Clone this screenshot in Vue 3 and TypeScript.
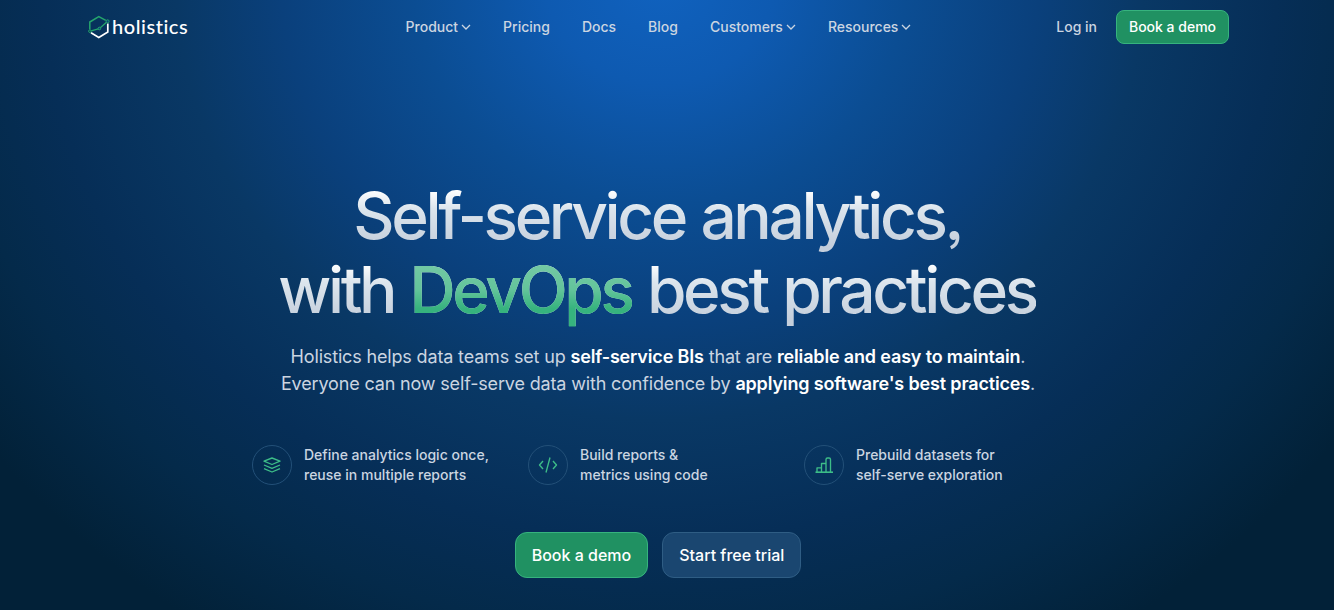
<script setup lang="ts">
import { ref } from 'vue'

interface NavItem {
  label: string
  dropdown: boolean
}

interface Feature {
  icon: string
  lines: string[]
}

const navItems = ref<NavItem[]>([
  { label: 'Product', dropdown: true },
  { label: 'Pricing', dropdown: false },
  { label: 'Docs', dropdown: false },
  { label: 'Blog', dropdown: false },
  { label: 'Customers', dropdown: true },
  { label: 'Resources', dropdown: true },
])

const features = ref<Feature[]>([
  { icon: 'layers', lines: ['Define analytics logic once,', 'reuse in multiple reports'] },
  { icon: 'code', lines: ['Build reports &', 'metrics using code'] },
  { icon: 'chart', lines: ['Prebuild datasets for', 'self-serve exploration'] },
])
</script>

<template>
  <div class="page">
    <header class="header">
      <a class="logo">
        <svg class="logo-mark" width="24" height="24" viewBox="0 0 24 24" fill="none">
          <path d="M1.800 14.500V7L10.800 1.600l7 3.700" stroke="#25a56c" stroke-width="1.500" />
          <path d="M3 17.800 10.800 22.400l9-5.400V8.400" stroke="#fff" stroke-width="1.700" />
          <path d="M3.200 15.800 10.300 14l2-1.200 6.200-5.600" stroke="#25a56c" stroke-width="1.300" />
          <circle cx="1.900" cy="16.200" r="1.300" stroke="#25a56c" />
          <circle cx="11.400" cy="13.500" r="1.300" stroke="#25a56c" fill="#0a417d" />
          <circle cx="19.600" cy="6.300" r="1.500" stroke="#25a56c" fill="#0a417d" />
        </svg>
        <span class="logo-text">holistics</span>
      </a>
      <nav class="nav">
        <a v-for="item in navItems" :key="item.label" class="nav-link">
          {{ item.label }}
          <svg v-if="item.dropdown" class="chevron" width="10" height="6" viewBox="0 0 10 6" fill="none">
            <path d="M1 1l4 4 4-4" stroke="currentColor" stroke-width="1.300" />
          </svg>
        </a>
      </nav>
      <div class="actions">
        <a class="nav-link">Log in</a>
        <button class="btn btn-small btn-green">Book a demo</button>
      </div>
    </header>

    <main class="hero">
      <h1 class="title">
        <span class="title-line">Self-service analytics,</span>
        <span class="title-line">with <em>DevOps</em> best practices</span>
      </h1>
      <p class="subtitle">
        Holistics helps data teams set up <b>self-service BIs</b> that are <b>reliable and easy to maintain</b>.<br>
        Everyone can now self-serve data with confidence by <b>applying software's best practices</b>.
      </p>
      <ul class="features">
        <li v-for="feature in features" :key="feature.icon" class="feature">
          <span class="feature-icon">
            <svg v-if="feature.icon === 'layers'" width="20" height="20" viewBox="0 0 20 20" fill="none">
              <path d="M2 6.200 10 3l8 3.200-8 3.300z" />
              <path d="M2 10l8 3.300 8-3.300M2 13.700l8 3.300 8-3.300" />
            </svg>
            <svg v-else-if="feature.icon === 'code'" width="20" height="20" viewBox="0 0 20 20" fill="none">
              <path d="M5 6 1.500 10 5 14M15 6l3.500 4-3.500 4M12 2.500l-4 15" />
            </svg>
            <svg v-else width="20" height="20" viewBox="0 0 20 20" fill="none">
              <path d="M3 17v-4.200h4.500V17M7.500 17V8.500h4.500V17M12 17V4.500q0-1.500 1.500-1.500h1.500q1.500 0 1.500 1.500V17" />
              <path d="M1.500 17.200h17.500" stroke-width="1.600" />
            </svg>
          </span>
          <span class="feature-text">
            <span v-for="line in feature.lines" :key="line">{{ line }}</span>
          </span>
        </li>
      </ul>
      <div class="cta">
        <button class="btn btn-large btn-green">Book a demo</button>
        <button class="btn btn-large btn-ghost">Start free trial</button>
      </div>
    </main>
  </div>
</template>

<style>
body {
  background: #022138;
}
</style>

<style scoped>
.page {
  box-sizing: border-box;
  height: 610px;
  padding-right: 18px;
  overflow: hidden;
  font-family: Inter, "Liberation Sans", sans-serif;
  color: #cbd5e1;
  background: radial-gradient(ellipse 880px 800px at 660px -20px, #1062bf 0%, #0e5ab1 13%, #0b4d93 28%, #0a407c 43%, #093865 55%, #062e57 70%, #042a4a 82%, #022138 96%);
}

.header {
  display: grid;
  grid-template-columns: 1fr auto 1fr;
  align-items: center;
  height: 54px;
  padding: 0 87px 0 88px;
}

.logo {
  display: flex;
  align-items: center;
}

.logo-text {
  padding-bottom: 2px;
  font-family: Lato, sans-serif;
  font-size: 20px;
  font-weight: 500;
  line-height: 24px;
  letter-spacing: 0.550px;
  color: #fff;
}

.nav {
  display: flex;
  gap: 32px;
}

.nav-link {
  display: flex;
  align-items: center;
  gap: 3px;
  font-size: 14px;
  font-weight: 500;
  line-height: 20px;
}

.actions {
  display: flex;
  align-items: center;
  justify-content: flex-end;
  gap: 19px;
}

.btn {
  box-sizing: border-box;
  padding: 0;
  font-family: inherit;
  font-weight: 500;
  color: #fff;
  white-space: nowrap;
}

.btn-small {
  width: 113px;
  height: 34px;
  padding-bottom: 2px;
  border-radius: 8px;
  font-size: 14px;
}

.btn-large {
  height: 46px;
  padding: 0 16px;
  border-radius: 12px;
  font-size: 16px;
}

.btn-green {
  border: 1px solid #36b37e;
  background: #209162;
}

.btn-ghost {
  border: 1px solid #2f5d84;
  background: #1a4670;
}

.hero {
  display: flex;
  flex-direction: column;
  align-items: center;
}

.title {
  margin: 125px 0 0;
  font-size: 64px;
  font-weight: 500;
  font-feature-settings: "ss03";
  line-height: 73.600px;
  letter-spacing: -3.400px;
  word-spacing: 1.700px;
  text-align: center;
}

.title-line {
  display: block;
  margin-right: 2px;
  color: transparent;
  background: linear-gradient(180deg, #fff 15%, #dce5ed 40%, #c5cfdc 90%);
  background-clip: text;
}

.title-line em {
  font-style: normal;
  background: linear-gradient(180deg, #75c9a5 15%, #63c49b 50%, #36b37e 75%);
  background-clip: text;
}

.subtitle {
  margin: 17px 0 0;
  font-size: 18px;
  line-height: 27px;
  letter-spacing: -0.160px;
  text-align: center;
}

.subtitle b {
  font-weight: 600;
  color: #fff;
}

.features {
  display: flex;
  width: 812px;
  margin: 48px 0 0;
  padding: 0;
  list-style: none;
}

.feature {
  display: flex;
  flex: 0 0 276px;
  align-items: center;
  gap: 12px;
}

.feature-icon {
  box-sizing: border-box;
  display: flex;
  align-items: center;
  justify-content: center;
  width: 40px;
  height: 40px;
  border: 1px solid #235078;
  border-radius: 50%;
}

.feature-icon svg {
  stroke: #3dbd88;
  stroke-width: 1.35;
  stroke-linejoin: round;
}

.feature-text {
  display: flex;
  flex-direction: column;
  font-size: 14px;
  font-weight: 500;
  line-height: 20px;
}

.cta {
  display: flex;
  gap: 14px;
  margin-top: 47px;
}
</style>
